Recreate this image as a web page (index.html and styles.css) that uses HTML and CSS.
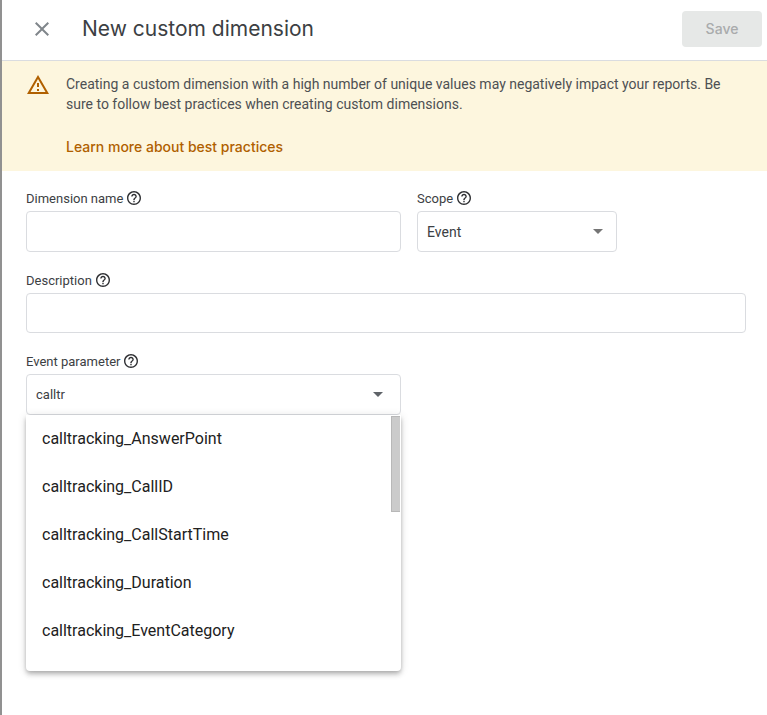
FILE: index.html
```html
<!DOCTYPE html>
<html lang="en">
<head>
    <meta charset="UTF-8">
    <meta name="viewport" content="width=device-width, initial-scale=1.0">
    <title>New custom dimension</title>
    <link rel="stylesheet" href="styles.css">
</head>
<body>
    <!-- Shared help icon -->
    <svg class="sprite" aria-hidden="true">
        <symbol id="help" viewBox="2 2 20 20">
            <path d="M11 18h2v-2h-2v2zm1-16C6.48 2 2 6.48 2 12s4.48 10 10 10 10-4.48 10-10S17.52 2 12 2zm0 18c-4.410 0-8-3.590-8-8s3.590-8 8-8 8 3.590 8 8-3.590 8-8 8zm0-14c-2.210 0-4 1.790-4 4h2c0-1.100.9-2 2-2s2 .9 2 2c0 2-3 1.750-3 5h2c0-2.250 3-2.500 3-5 0-2.210-1.790-4-4-4z"/>
        </symbol>
    </svg>

    <div class="panel">
        <header class="header">
            <button type="button" class="close" aria-label="Close">
                <svg viewBox="0 0 24 24" width="24" height="24"><path d="M19 6.410L17.590 5 12 10.590 6.410 5 5 6.410 10.590 12 5 17.590 6.410 19 12 13.410 17.590 19 19 17.590 13.410 12z"/></svg>
            </button>
            <h1>New custom dimension</h1>
            <button type="submit" form="dimensionForm" class="save" disabled>Save</button>
        </header>

        <div class="warning">
            <svg class="warning-icon" viewBox="0 0 24 24" width="24" height="24"><path d="M12 5.990L19.530 19H4.470L12 5.990M12 2L1 21h22L12 2zm1 14h-2v2h2v-2zm0-6h-2v4h2v-4z"/></svg>
            <div class="warning-text">
                <p>Creating a custom dimension with a high number of unique values may negatively impact your reports. Be sure to follow best practices when creating custom dimensions.</p>
                <a href="#">Learn more about best practices</a>
            </div>
        </div>

        <form id="dimensionForm" class="form">
            <div class="form-group">
                <div class="label-row">
                    <label for="dimensionName">Dimension name</label>
                    <svg class="help"><use href="#help"/></svg>
                </div>
                <input type="text" id="dimensionName">
            </div>

            <div class="form-group">
                <div class="label-row">
                    <label for="scope">Scope</label>
                    <svg class="help"><use href="#help"/></svg>
                </div>
                <div class="control">
                    <select id="scope">
                        <option>Event</option>
                        <option>User</option>
                    </select>
                    <span class="arrow"></span>
                </div>
            </div>

            <div class="form-group wide">
                <div class="label-row">
                    <label for="description">Description</label>
                    <svg class="help"><use href="#help"/></svg>
                </div>
                <input type="text" id="description">
            </div>

            <div class="form-group">
                <div class="label-row">
                    <label for="eventParameter">Event parameter</label>
                    <svg class="help"><use href="#help"/></svg>
                </div>
                <div class="control">
                    <input type="text" id="eventParameter" value="calltr" role="combobox" aria-expanded="true" aria-controls="parameterList" autocomplete="off">
                    <span class="arrow dark"></span>
                    <div class="menu">
                        <ul id="parameterList" role="listbox">
                            <li role="option">calltracking_AnswerPoint</li>
                            <li role="option">calltracking_CallID</li>
                            <li role="option">calltracking_CallStartTime</li>
                            <li role="option">calltracking_Duration</li>
                            <li role="option">calltracking_EventCategory</li>
                        </ul>
                        <span class="thumb"></span>
                    </div>
                </div>
            </div>
        </form>
    </div>
</body>
</html>
```
FILE: styles.css
```css
* {
    box-sizing: border-box;
}
body {
    margin: 0;
    font-family: Roboto, Arial, sans-serif;
    font-size: 14px;
    color: #3c4043;
    background-color: #919191;
}
.sprite {
    display: none;
}
.panel {
    min-height: 100vh;
    margin-left: 2px;
    background-color: white;
}
.header {
    display: flex;
    align-items: center;
    height: 61px;
    padding: 0 5px 3px 28px;
    border-bottom: 1px solid #dadce0;
}
.close {
    display: flex;
    padding: 0;
    border: none;
    background: none;
    fill: #80868b;
    cursor: pointer;
}
h1 {
    flex: 1;
    margin: 0 0 0 28px;
    font-family: Inter, sans-serif;
    font-size: 21px;
    font-weight: 400;
    line-height: 28px;
}
.save {
    width: 80px;
    height: 36px;
    border: none;
    border-radius: 4px;
    background-color: #e6e8e7;
    color: #a9abac;
    font-family: Inter, sans-serif;
    font-size: 14px;
    font-weight: 500;
}
.warning {
    display: flex;
    gap: 16px;
    padding: 12px 24px 14px;
    background-color: #fdf6de;
    color: #4d5053;
}
.warning-icon {
    flex: none;
    fill: #b06000;
}
.warning p {
    margin: 1px 0 23px;
    line-height: 20px;
}
.warning a {
    display: block;
    color: #b06000;
    font-family: Inter, sans-serif;
    font-size: 14px;
    font-weight: 500;
    line-height: 20px;
    text-decoration: none;
}
.form {
    display: grid;
    grid-template-columns: 375fr 200fr 113fr;
    gap: 20px 16px;
    padding: 19px 21px 44px 24px;
}
.wide {
    grid-column: 1 / -1;
}
.label-row {
    display: flex;
    align-items: flex-start;
    gap: 4px;
    height: 21px;
}
label {
    font-size: 13px;
    line-height: 18px;
}
.help {
    width: 14px;
    height: 14px;
    margin-top: 1px;
    fill: #303134;
}
input, select {
    display: block;
    width: 100%;
    height: 41px;
    padding: 0 9px;
    border: 1px solid #dadce0;
    border-radius: 4px;
    background-color: white;
    color: #3c4043;
    font-family: inherit;
    font-size: 13px;
    appearance: none;
    outline: none;
}
select {
    font-size: 14px;
}
.wide input {
    height: 40px;
}
.control {
    position: relative;
}
.arrow {
    position: absolute;
    top: 18px;
    right: 14px;
    border: 5px solid transparent;
    border-top-color: #757575;
    border-bottom: none;
    pointer-events: none;
}
.arrow.dark {
    right: 18px;
    border-top-color: #5f6368;
}
.menu {
    position: absolute;
    top: 100%;
    left: 0;
    right: 0;
    height: 256px;
    overflow: hidden;
    border-radius: 0 0 4px 4px;
    background-color: white;
    box-shadow: 0 2px 4px -1px rgba(0,0,0,0.2), 0 4px 5px rgba(0,0,0,0.14), 0 1px 10px rgba(0,0,0,0.12);
}
.menu ul {
    margin: 0;
    padding: 0;
    list-style: none;
}
.menu li {
    padding: 0 16px;
    color: #212121;
    font-size: 16px;
    line-height: 48px;
}
.thumb {
    position: absolute;
    top: 1px;
    right: 1px;
    width: 9px;
    height: 96px;
    border: 1px solid #b8b8b8;
    border-right: none;
    background-color: #cbcbcb;
}
```
